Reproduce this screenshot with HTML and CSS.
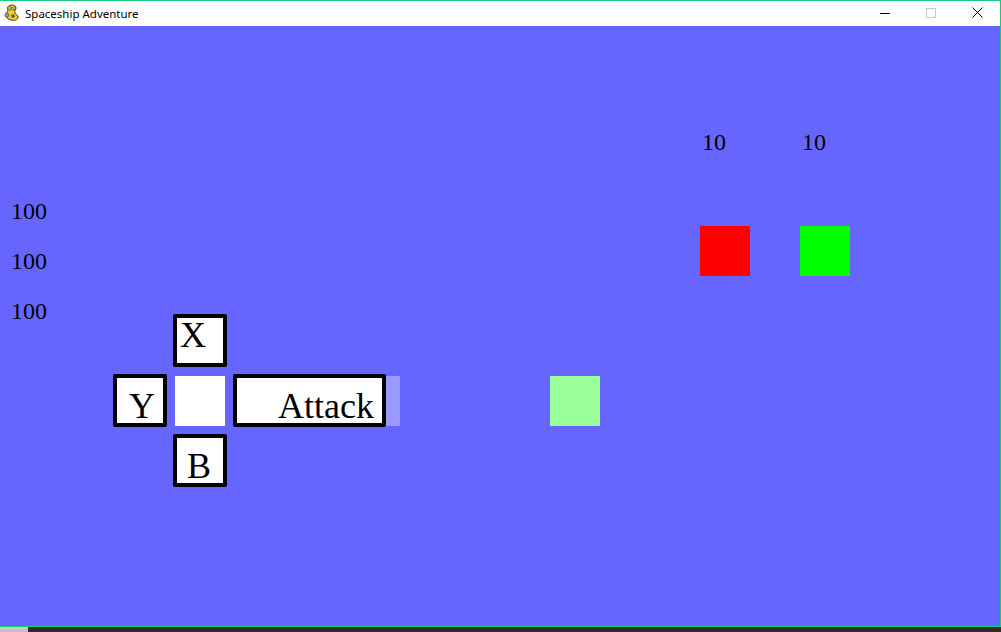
FILE: index.html
```html
<!DOCTYPE html>
<html lang="en">
<head>
<meta charset="utf-8">
<title>Spaceship Adventure</title>
<link rel="stylesheet" href="styles.css">
</head>
<body>
<div class="screen">
  <div class="window">
    <div class="titlebar">
      <div class="title-left">
        <svg class="app-icon" width="18" height="18" viewBox="0 0 18 18">
          <path d="M6 2 C9 0 13 1 13 4 C13 6 11 7 12 9 C13 11 15 11 15 13 C15 16 11 17 8 16 C5 15 3 14 3 11 C3 9 5 8 5 6 C4 4 4 3 6 2 Z" fill="#f2d21b" stroke="#3a3a2a" stroke-width="1"/>
          <circle cx="7.5" cy="4.5" r="1.6" fill="#fff" stroke="#222" stroke-width="0.6"/>
          <circle cx="10.5" cy="4.5" r="1.6" fill="#fff" stroke="#222" stroke-width="0.6"/>
          <circle cx="7.8" cy="4.8" r="0.6" fill="#000"/>
          <circle cx="10.8" cy="4.8" r="0.6" fill="#000"/>
          <path d="M2 10 C3 8 6 9 6 11 C6 13 3 14 2 12 Z" fill="#9a9a9a" stroke="#333" stroke-width="0.6"/>
          <path d="M8 11 L11 10 L12 13 L9 14 Z" fill="#555"/>
        </svg>
        <span class="title-text">Spaceship Adventure</span>
      </div>
      <div class="controls">
        <div class="ctl">
          <svg width="10" height="10" viewBox="0 0 10 10"><path d="M0 5.5 H10" stroke="#000" stroke-width="1"/></svg>
        </div>
        <div class="ctl">
          <svg width="10" height="10" viewBox="0 0 10 10"><rect x="0.5" y="0.5" width="9" height="9" fill="none" stroke="#c6c6c6" stroke-width="1"/></svg>
        </div>
        <div class="ctl">
          <svg width="11" height="11" viewBox="0 0 11 11"><path d="M0.5 0.5 L10.5 10.5 M10.5 0.5 L0.5 10.5" stroke="#000" stroke-width="1"/></svg>
        </div>
      </div>
    </div>
    <div class="canvas">
      <span class="num stat s1">100</span>
      <span class="num stat s2">100</span>
      <span class="num stat s3">100</span>
      <span class="num enemy e1">10</span>
      <span class="num enemy e2">10</span>

      <div class="sq red"></div>
      <div class="sq lime"></div>
      <div class="sq mint"></div>

      <div class="key kx"><span class="lbl">X</span></div>
      <div class="key ky"><span class="lbl">Y</span></div>
      <div class="key kb"><span class="lbl">B</span></div>
      <div class="center-cell"></div>
      <div class="key attack"><span class="lbl">Attack</span></div>
      <div class="strip"></div>
    </div>
  </div>
  <div class="taskbar"><div class="task-start"></div></div>
</div>
</body>
</html>
```

FILE: styles.css
```css
html, body {
  margin: 0;
  padding: 0;
  background: #2d2d2d;
  overflow: hidden;
}

.screen {
  width: 1001px;
  height: 632px;
  display: flex;
  flex-direction: column;
}

.window {
  width: 1000px;
  border-top: 1px solid #1fc97c;
  border-right: 1px solid #1fc97c;
  border-bottom: 1px solid #1fc97c;
  display: flex;
  flex-direction: column;
  background: #fff;
}

.titlebar {
  height: 25px;
  display: flex;
  justify-content: space-between;
  align-items: stretch;
  background: #fff;
}

.title-left {
  display: flex;
  align-items: center;
  padding-left: 3px;
  gap: 4px;
}

.app-icon {
  margin-top: -1px;
}

.title-text {
  font-family: "Noto Sans", "DejaVu Sans", sans-serif;
  font-size: 11.5px;
  color: #000;
  margin-top: -1px;
}

.controls {
  display: flex;
}

.ctl {
  width: 46px;
  display: flex;
  align-items: center;
  justify-content: center;
  padding-bottom: 2px;
}

.canvas {
  position: relative;
  height: 600px;
  background: #6666ff;
  font-family: "Liberation Serif", "Times New Roman", serif;
  color: #000;
}

.num {
  position: absolute;
  font-size: 24px;
  line-height: 1;
}

.s1 { left: 11px; top: 173px; }
.s2 { left: 11px; top: 223px; }
.s3 { left: 11px; top: 273px; }
.e1 { left: 702px; top: 104px; }
.e2 { left: 802px; top: 104px; }

.sq {
  position: absolute;
  width: 50px;
  height: 50px;
}
.red  { left: 700px; top: 200px; background: #ff0000; }
.lime { left: 800px; top: 200px; background: #00ff00; }
.mint { left: 550px; top: 350px; background: #99ff99; }

.key {
  position: absolute;
  box-sizing: border-box;
  width: 54px;
  height: 53px;
  background: #fff;
  border: 4px solid #000;
  border-radius: 2px;
}

.lbl {
  position: absolute;
  font-size: 36px;
  line-height: 1;
  white-space: nowrap;
}

.kx { left: 173px; top: 288px; }
.kx .lbl { left: 3px; top: -1px; }

.ky { left: 113px; top: 348px; }
.ky .lbl { left: 12px; top: 10px; }

.kb { left: 173px; top: 408px; }
.kb .lbl { left: 10px; top: 10px; }

.attack { left: 233px; top: 348px; width: 153px; }
.attack .lbl { left: 41px; top: 10px; }

.center-cell {
  position: absolute;
  left: 175px;
  top: 350px;
  width: 50px;
  height: 50px;
  background: #fff;
}

.strip {
  position: absolute;
  left: 386px;
  top: 350px;
  width: 14px;
  height: 50px;
  background: #9999ff;
}

.taskbar {
  height: 5px;
  background: #2d2d2d;
  display: flex;
}

.task-start {
  width: 28px;
  background: linear-gradient(#cfcfcf, #bdbdbd);
}
```
